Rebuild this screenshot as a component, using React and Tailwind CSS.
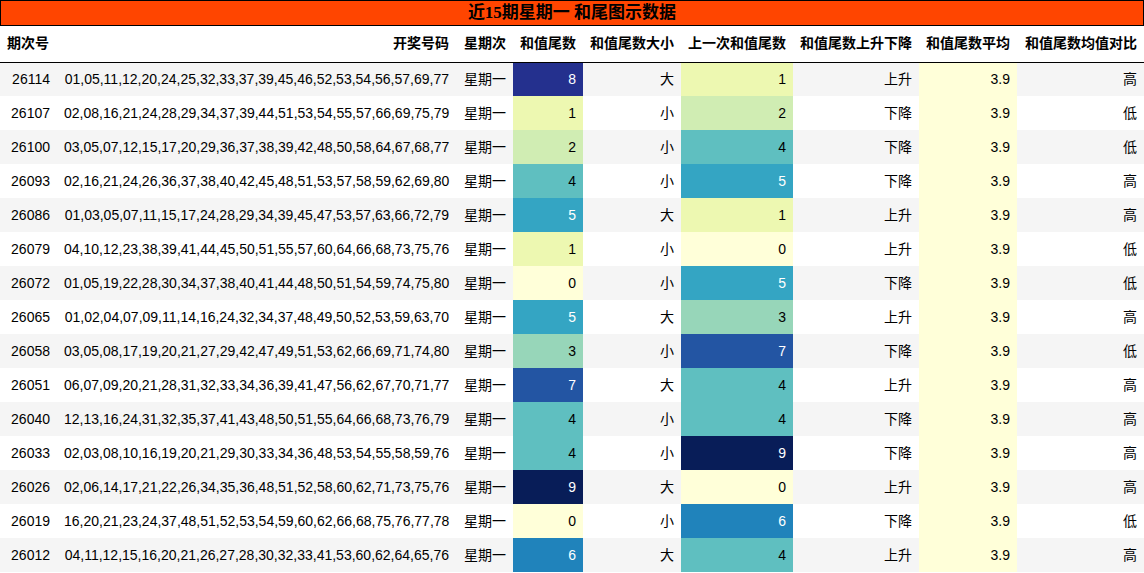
const C = ["#ffffd9", "#edf8b1", "#d0edb3", "#97d6b9", "#5fbfc0", "#34a5c3", "#2083bb", "#2355a3", "#24308e", "#081d58"];

const rows = [
  ["26114", "01,05,11,12,20,24,25,32,33,37,39,45,46,52,53,54,56,57,69,77", 8, "大", 1, "上升", "高"],
  ["26107", "02,08,16,21,24,28,29,34,37,39,44,51,53,54,55,57,66,69,75,79", 1, "小", 2, "下降", "低"],
  ["26100", "03,05,07,12,15,17,20,29,36,37,38,39,42,48,50,58,64,67,68,77", 2, "小", 4, "下降", "低"],
  ["26093", "02,16,21,24,26,36,37,38,40,42,45,48,51,53,57,58,59,62,69,80", 4, "小", 5, "下降", "高"],
  ["26086", "01,03,05,07,11,15,17,24,28,29,34,39,45,47,53,57,63,66,72,79", 5, "大", 1, "上升", "高"],
  ["26079", "04,10,12,23,38,39,41,44,45,50,51,55,57,60,64,66,68,73,75,76", 1, "小", 0, "上升", "低"],
  ["26072", "01,05,19,22,28,30,34,37,38,40,41,44,48,50,51,54,59,74,75,80", 0, "小", 5, "下降", "低"],
  ["26065", "01,02,04,07,09,11,14,16,24,32,34,37,48,49,50,52,53,59,63,70", 5, "大", 3, "上升", "高"],
  ["26058", "03,05,08,17,19,20,21,27,29,42,47,49,51,53,62,66,69,71,74,80", 3, "小", 7, "下降", "低"],
  ["26051", "06,07,09,20,21,28,31,32,33,34,36,39,41,47,56,62,67,70,71,77", 7, "大", 4, "上升", "高"],
  ["26040", "12,13,16,24,31,32,35,37,41,43,48,50,51,55,64,66,68,73,76,79", 4, "小", 4, "下降", "高"],
  ["26033", "02,03,08,10,16,19,20,21,29,30,33,34,36,48,53,54,55,58,59,76", 4, "小", 9, "下降", "高"],
  ["26026", "02,06,14,17,21,22,26,34,35,36,48,51,52,58,60,62,71,73,75,76", 9, "大", 0, "上升", "高"],
  ["26019", "16,20,21,23,24,37,48,51,52,53,54,59,60,62,66,68,75,76,77,78", 0, "小", 6, "下降", "低"],
  ["26012", "04,11,12,15,16,20,21,26,27,28,30,32,33,41,53,60,62,64,65,76", 6, "大", 4, "上升", "高"],
];

const heads = ["期次号", "开奖号码", "星期次", "和值尾数", "和值尾数大小", "上一次和值尾数", "和值尾数上升下降", "和值尾数平均", "和值尾数均值对比"];
const widths = ["w-[57px]", "w-[399px]", "w-[57px]", "w-[70px]", "w-[98px]", "w-[112px]", "w-[126px]", "w-[98px]", "w-[127px]"];

export default function App() {
  return (
    <div className="w-[1144px] h-[573px] bg-white overflow-hidden text-[14px] text-black" style={{ fontFamily: '"Liberation Sans", "Noto Sans CJK SC", sans-serif' }}>
      <div className="h-[26px] bg-[#ff4500] border border-black flex items-center justify-center font-bold text-[17px]" style={{ fontFamily: '"Liberation Serif", "Noto Sans CJK SC", serif' }}>
        近15期星期一 和尾图示数据
      </div>
      <table className="border-collapse table-fixed w-[1144px]">
        <thead>
          <tr className="h-[36px] border-b border-black font-bold">
            {heads.map((h, i) => (
              <th key={h} className={`${widths[i]} px-[7px] whitespace-nowrap ${i === 0 ? "text-left" : "text-right"}`}>{h}</th>
            ))}
          </tr>
        </thead>
        <tbody>
          {rows.map((r, i) => (
            <tr key={r[0]} className={`h-[34px] ${i % 2 === 0 ? "bg-[#f5f5f5]" : "bg-white"}`}>
              <td className="px-[7px] text-right">{r[0]}</td>
              <td className="px-[7px] text-right whitespace-nowrap">{r[1]}</td>
              <td className="px-[7px] text-right">星期一</td>
              <td className="px-[7px] text-right" style={{ background: C[r[2]], color: r[2] >= 5 ? "#fff" : "#000" }}>{r[2]}</td>
              <td className="px-[7px] text-right">{r[3]}</td>
              <td className="px-[7px] text-right" style={{ background: C[r[4]], color: r[4] >= 5 ? "#fff" : "#000" }}>{r[4]}</td>
              <td className="px-[7px] text-right">{r[5]}</td>
              <td className="px-[7px] text-right bg-[#ffffd9]">3.9</td>
              <td className="px-[7px] text-right">{r[6]}</td>
            </tr>
          ))}
        </tbody>
      </table>
    </div>
  );
}
